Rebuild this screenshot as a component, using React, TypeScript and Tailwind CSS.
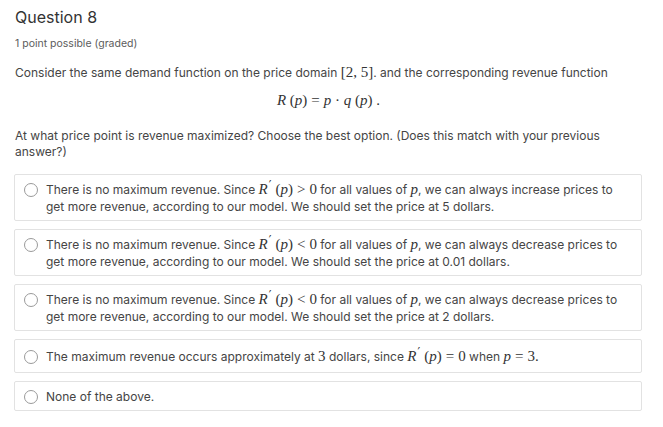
import React from "react";

// math bits render in a serif face, like the MathJax output in the original
function M({ children }: { children: React.ReactNode }) {
  return (
    <span className="font-['Liberation_Serif','DejaVu_Serif',serif] text-[15px] leading-[14px] text-[#333]">
      {children}
    </span>
  );
}

function I({ children }: { children: React.ReactNode }) {
  return <i>{children}</i>;
}

function Rel({ children }: { children: React.ReactNode }) {
  return <span className="mx-[4px]">{children}</span>;
}

function Deriv() {
  return (
    <>
      <I>R</I>
      <span className="relative -top-[5px] ml-[1px] mr-[4px] font-['DejaVu_Sans',sans-serif] text-[12px]">
        ′
      </span>
      (<I>p</I>)
    </>
  );
}

const options: React.ReactNode[] = [
  <>
    There is no maximum revenue. Since{" "}
    <M>
      <Deriv />
      <Rel>&gt;</Rel>0
    </M>{" "}
    for all values of{" "}
    <M>
      <I>p</I>
    </M>
    , we can always increase prices to get more revenue, according to our model. We should set the
    price at 5 dollars.
  </>,
  <>
    There is no maximum revenue. Since{" "}
    <M>
      <Deriv />
      <Rel>&lt;</Rel>0
    </M>{" "}
    for all values of{" "}
    <M>
      <I>p</I>
    </M>
    , we can always decrease prices to get more revenue, according to our model. We should set the
    price at 0.01 dollars.
  </>,
  <>
    There is no maximum revenue. Since{" "}
    <M>
      <Deriv />
      <Rel>&lt;</Rel>0
    </M>{" "}
    for all values of{" "}
    <M>
      <I>p</I>
    </M>
    , we can always decrease prices to get more revenue, according to our model. We should set the
    price at 2 dollars.
  </>,
  <>
    The maximum revenue occurs approximately at <M>3</M> dollars, since{" "}
    <M>
      <Deriv />
      <Rel>=</Rel>0
    </M>{" "}
    when{" "}
    <M>
      <I>p</I>
      <Rel>=</Rel>3.
    </M>
  </>,
  <>None of the above.</>,
];

export default function App() {
  return (
    <div className="w-[663px] h-[427px] bg-white pl-[15px] pr-[21px] pt-[6px] font-['Inter',sans-serif] text-[#454545] overflow-hidden">
      <h2 className="text-[16px] leading-[22px] text-[#333333]">Question 8</h2>

      <div className="mt-[9px] text-[10.5px] leading-[14px] text-[#5c5c5c]">
        1 point possible (graded)
      </div>

      <p className="mt-[13px] text-[12px] leading-[18px]">
        Consider the same demand function on the price domain{" "}
        <M>[2, 5]</M>. and the corresponding revenue function
      </p>

      <div className="mt-[7px] text-center leading-[20px]">
        <M>
          <I>R</I> (<I>p</I>)<Rel>=</Rel>
          <I>p</I> · <I>q</I> (<I>p</I>) .
        </M>
      </div>

      <p className="mt-[19px] text-[12px] leading-[16px]">
        At what price point is revenue maximized? Choose the best option. (Does this match with your
        previous answer?)
      </p>

      <div className="mt-[14px] flex flex-col gap-[8px] -ml-px">
        {options.map((o, i) => (
          <label
            key={i}
            className={`flex items-start gap-[8px] border border-[#e2e2e2] rounded-[2px] px-[9px] text-[12px] leading-[17px] ${
              i === 3 ? "pt-[8px] pb-[7px]" : "pt-[6px] pb-[5px]"
            }`}
          >
            <span className="mt-[2px] w-[14px] h-[14px] shrink-0 rounded-full border border-[#9a9a9a] bg-white" />
            <span>{o}</span>
          </label>
        ))}
      </div>
    </div>
  );
}
